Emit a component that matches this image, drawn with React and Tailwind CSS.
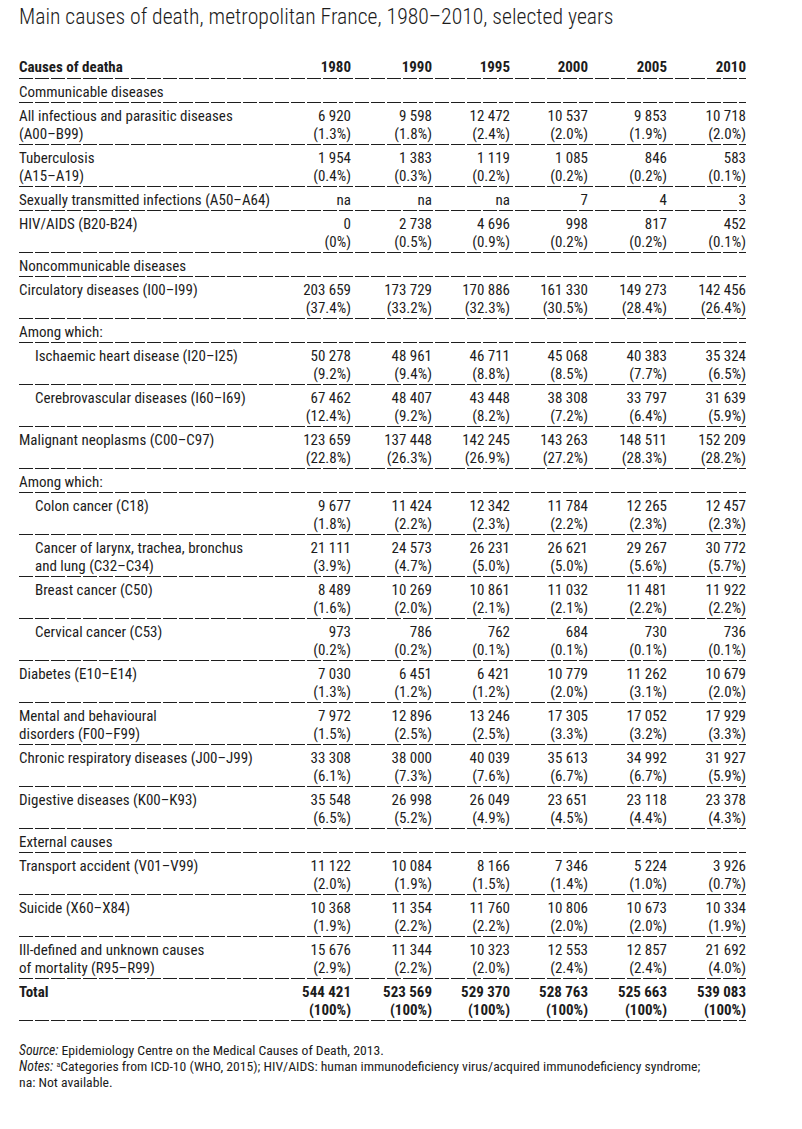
import React from "react";

const N = "\u00A0";
const f = (s) => s.replace(/ /g, N);

const rows = [
  { type: "section", label: "Communicable diseases" },
  { label: ["All infectious and parasitic diseases", "(A00–B99)"], v: [["6 920", "1.3%"], ["9 598", "1.8%"], ["12 472", "2.4%"], ["10 537", "2.0%"], ["9 853", "1.9%"], ["10 718", "2.0%"]] },
  { label: ["Tuberculosis", "(A15–A19)"], v: [["1 954", "0.4%"], ["1 383", "0.3%"], ["1 119", "0.2%"], ["1 085", "0.2%"], ["846", "0.2%"], ["583", "0.1%"]] },
  { label: ["Sexually transmitted infections (A50–A64)"], v: [["na"], ["na"], ["na"], ["7"], ["4"], ["3"]] },
  { label: ["HIV/AIDS (B20-B24)"], v: [["0", "0%"], ["2 738", "0.5%"], ["4 696", "0.9%"], ["998", "0.2%"], ["817", "0.2%"], ["452", "0.1%"]] },
  { type: "section", label: "Noncommunicable diseases" },
  { label: ["Circulatory diseases (I00–I99)"], v: [["203 659", "37.4%"], ["173 729", "33.2%"], ["170 886", "32.3%"], ["161 330", "30.5%"], ["149 273", "28.4%"], ["142 456", "26.4%"]] },
  { type: "section", label: "Among which:" },
  { indent: true, label: ["Ischaemic heart disease (I20–I25)"], v: [["50 278", "9.2%"], ["48 961", "9.4%"], ["46 711", "8.8%"], ["45 068", "8.5%"], ["40 383", "7.7%"], ["35 324", "6.5%"]] },
  { indent: true, label: ["Cerebrovascular diseases (I60–I69)"], v: [["67 462", "12.4%"], ["48 407", "9.2%"], ["43 448", "8.2%"], ["38 308", "7.2%"], ["33 797", "6.4%"], ["31 639", "5.9%"]] },
  { label: ["Malignant neoplasms (C00–C97)"], v: [["123 659", "22.8%"], ["137 448", "26.3%"], ["142 245", "26.9%"], ["143 263", "27.2%"], ["148 511", "28.3%"], ["152 209", "28.2%"]] },
  { type: "section", label: "Among which:" },
  { indent: true, label: ["Colon cancer (C18)"], v: [["9 677", "1.8%"], ["11 424", "2.2%"], ["12 342", "2.3%"], ["11 784", "2.2%"], ["12 265", "2.3%"], ["12 457", "2.3%"]] },
  { indent: true, label: ["Cancer of larynx, trachea, bronchus", "and lung (C32–C34)"], v: [["21 111", "3.9%"], ["24 573", "4.7%"], ["26 231", "5.0%"], ["26 621", "5.0%"], ["29 267", "5.6%"], ["30 772", "5.7%"]] },
  { indent: true, label: ["Breast cancer (C50)"], v: [["8 489", "1.6%"], ["10 269", "2.0%"], ["10 861", "2.1%"], ["11 032", "2.1%"], ["11 481", "2.2%"], ["11 922", "2.2%"]] },
  { indent: true, label: ["Cervical cancer (C53)"], v: [["973", "0.2%"], ["786", "0.2%"], ["762", "0.1%"], ["684", "0.1%"], ["730", "0.1%"], ["736", "0.1%"]] },
  { label: ["Diabetes (E10–E14)"], v: [["7 030", "1.3%"], ["6 451", "1.2%"], ["6 421", "1.2%"], ["10 779", "2.0%"], ["11 262", "3.1%"], ["10 679", "2.0%"]] },
  { label: ["Mental and behavioural", "disorders (F00–F99)"], v: [["7 972", "1.5%"], ["12 896", "2.5%"], ["13 246", "2.5%"], ["17 305", "3.3%"], ["17 052", "3.2%"], ["17 929", "3.3%"]] },
  { label: ["Chronic respiratory diseases (J00–J99)"], v: [["33 308", "6.1%"], ["38 000", "7.3%"], ["40 039", "7.6%"], ["35 613", "6.7%"], ["34 992", "6.7%"], ["31 927", "5.9%"]] },
  { label: ["Digestive diseases (K00–K93)"], v: [["35 548", "6.5%"], ["26 998", "5.2%"], ["26 049", "4.9%"], ["23 651", "4.5%"], ["23 118", "4.4%"], ["23 378", "4.3%"]] },
  { type: "section", label: "External causes" },
  { label: ["Transport accident (V01–V99)"], v: [["11 122", "2.0%"], ["10 084", "1.9%"], ["8 166", "1.5%"], ["7 346", "1.4%"], ["5 224", "1.0%"], ["3 926", "0.7%"]] },
  { label: ["Suicide (X60–X84)"], v: [["10 368", "1.9%"], ["11 354", "2.2%"], ["11 760", "2.2%"], ["10 806", "2.0%"], ["10 673", "2.0%"], ["10 334", "1.9%"]] },
  { label: ["Ill-defined and unknown causes", "of mortality (R95–R99)"], v: [["15 676", "2.9%"], ["11 344", "2.2%"], ["10 323", "2.0%"], ["12 553", "2.4%"], ["12 857", "2.4%"], ["21 692", "4.0%"]] },
  { bold: true, label: ["Total"], v: [["544 421", "100%"], ["523 569", "100%"], ["529 370", "100%"], ["528 763", "100%"], ["525 663", "100%"], ["539 083", "100%"]] },
];

const years = ["1980", "1990", "1995", "2000", "2005", "2010"];

function Dash() {
  return <div className="h-px w-full bg-[repeating-linear-gradient(90deg,#1e1e1e_0_14px,transparent_14px_16px)]" />;
}

const grid = "grid grid-cols-[253px_79px_81px_78px_78px_79px_79px]";

export default function App() {
  return (
    <div className="w-[802px] h-[1129px] bg-white text-[#1c1c1c] pl-[19px] font-['Roboto_Condensed','Roboto',sans-serif] [font-stretch:condensed]">
      <h1 className="pt-[5px] text-[21.7px] leading-[24px] font-light whitespace-nowrap">
        Main causes of death, metropolitan France, 1980–2010, selected years
      </h1>
      <div className="w-[727px] mt-[29px] text-[15px] leading-[18px]">
        <div className={`${grid} pb-[2px] font-bold`}>
          <div>Causes of deatha</div>
          {years.map((y) => (
            <div key={y} className="text-right">{y}</div>
          ))}
        </div>
        <Dash />
        {rows.map((r, i) => (
          <React.Fragment key={i}>
            {r.type === "section" ? (
              <div className="pt-[4px] pb-px">{r.label}</div>
            ) : (
              <div className={`${grid} pt-[4px] pb-px ${r.bold ? "font-bold" : ""}`}>
                <div className={r.indent ? "pl-[16px]" : ""}>
                  {r.label.map((l, j) => (
                    <div key={j} className="whitespace-nowrap">{l}</div>
                  ))}
                </div>
                {r.v.map((c, j) => (
                  <div key={j} className="text-right whitespace-nowrap">
                    <div>{f(c[0])}</div>
                    {c[1] && <div>({c[1]})</div>}
                  </div>
                ))}
              </div>
            )}
            <Dash />
          </React.Fragment>
        ))}
      </div>
      <div className="mt-[21px] text-[13.7px] leading-[16px]">
        <div>
          <span className="italic">Source:</span> Epidemiology Centre on the Medical Causes of Death, 2013.
        </div>
        <div>
          <span className="italic">Notes:</span> <sup className="text-[8px]">a</sup>Categories from ICD-10 (WHO, 2015); HIV/AIDS: human immunodeficiency virus/acquired immunodeficiency syndrome;
        </div>
        <div>na: Not available.</div>
      </div>
    </div>
  );
}
